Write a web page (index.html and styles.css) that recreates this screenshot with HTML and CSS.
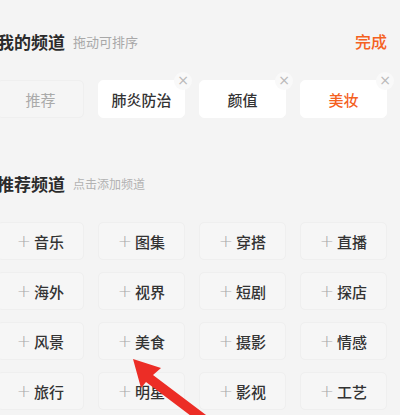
FILE: index.html
```html
<!DOCTYPE html>
<html lang="zh-CN">
<head>
  <meta charset="UTF-8">
  <meta name="viewport" content="width=device-width, initial-scale=1">
  <title>频道管理</title>
  <link rel="stylesheet" href="styles.css">
</head>
<body>
  <div class="page">
    <div class="section-head">
      <span class="title">我的频道</span>
      <span class="hint">拖动可排序</span>
      <a href="#" class="done">完成</a>
    </div>

    <div class="grid mine">
      <div class="cell fixed">推荐</div>
      <div class="cell white">肺炎防治<span class="close">×</span></div>
      <div class="cell white">颜值<span class="close">×</span></div>
      <div class="cell white active">美妆<span class="close">×</span></div>
    </div>

    <div class="section-head second">
      <span class="title">推荐频道</span>
      <span class="hint small">点击添加频道</span>
    </div>

    <div class="grid rec">
      <div class="cell"><i>+</i>音乐</div>
      <div class="cell"><i>+</i>图集</div>
      <div class="cell"><i>+</i>穿搭</div>
      <div class="cell"><i>+</i>直播</div>
      <div class="cell"><i>+</i>海外</div>
      <div class="cell"><i>+</i>视界</div>
      <div class="cell"><i>+</i>短剧</div>
      <div class="cell"><i>+</i>探店</div>
      <div class="cell"><i>+</i>风景</div>
      <div class="cell"><i>+</i>美食</div>
      <div class="cell"><i>+</i>摄影</div>
      <div class="cell"><i>+</i>情感</div>
      <div class="cell"><i>+</i>旅行</div>
      <div class="cell"><i>+</i>明星</div>
      <div class="cell"><i>+</i>影视</div>
      <div class="cell"><i>+</i>工艺</div>
    </div>

    <svg class="arrow" width="90" height="60" viewBox="0 0 90 60">
      <polygon points="3,3 31,12 23,19 80,62 73,69 16,26 11,32" fill="#ec2d26"/>
    </svg>
  </div>
</body>
</html>
```

FILE: styles.css
```css
/* Channel editor */
body {
  margin: 0;
  background-color: #f4f4f4;
  font-family: "Noto Sans CJK SC", "Noto Sans", sans-serif;
  color: #333;
  overflow: hidden;
}

.page {
  position: relative;
  width: 390px;
  margin-left: -3px;
  padding-top: 29px;
  height: 386px;
}

.section-head {
  display: flex;
  align-items: center;
  height: 24px;
}

.section-head.second {
  margin-top: 53px;
}

.title {
  font-size: 17px;
  font-weight: 700;
  color: #2b2b2b;
}

.hint {
  margin-left: 8px;
  font-size: 13px;
  color: #a8a8a8;
}

.hint.small {
  font-size: 12px;
  color: #b2b2b2;
}

.done {
  margin-left: auto;
  font-size: 16px;
  font-weight: 500;
  color: #f4611f;
  text-decoration: none;
}

.grid {
  display: grid;
  grid-template-columns: repeat(4, 1fr);
  column-gap: 14px;
  row-gap: 12px;
  margin-top: 27px;
}

.cell {
  position: relative;
  display: flex;
  align-items: center;
  justify-content: center;
  height: 38px;
  border-radius: 5px;
  background-color: #f6f6f6;
  border: 1px solid #efefef;
  box-sizing: border-box;
  font-size: 15px;
  font-weight: 500;
  color: #333;
}

.cell i {
  font-style: normal;
  font-size: 17px;
  color: #a8a8a8;
  margin-right: 3px;
  font-family: "DejaVu Sans", sans-serif;
  font-weight: 300;
}

.cell.fixed {
  color: #aaa;
  font-weight: 400;
  background-color: #f5f5f5;
}

.cell.white {
  background-color: #fff;
  border-color: #fff;
}

.cell.active {
  color: #f4611f;
}

.close {
  position: absolute;
  top: -9px;
  right: -8px;
  width: 18px;
  height: 18px;
  border-radius: 50%;
  background-color: #f9f9f9;
  color: #b8b8b8;
  font-size: 14px;
  font-weight: 400;
  line-height: 17px;
  text-align: center;
  font-family: "DejaVu Sans", sans-serif;
}

.arrow {
  position: absolute;
  left: 133px;
  top: 356px;
  overflow: visible;
}
```
